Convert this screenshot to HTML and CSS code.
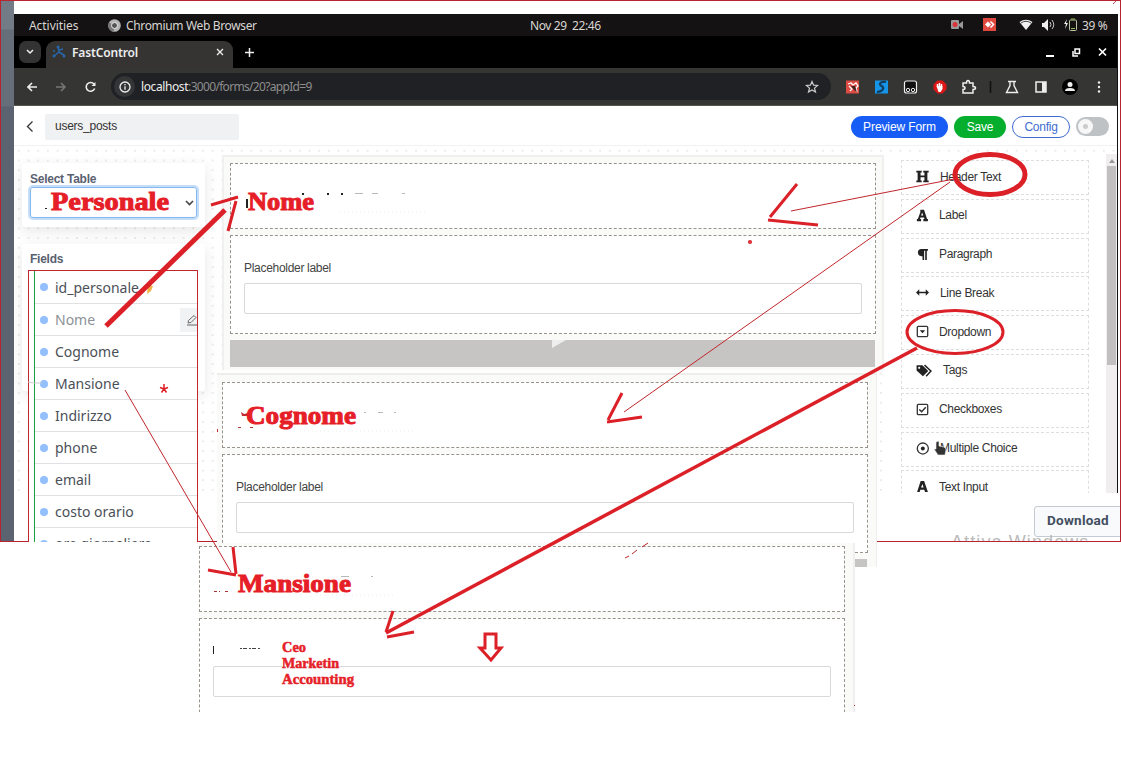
FILE: index.html
```html
<!DOCTYPE html>
<html lang="en">
<head>
<meta charset="utf-8">
<title>FastControl</title>
<link rel="stylesheet" href="styles.css">
</head>
<body>
<div class="screen">
  <div class="frame">
    <div class="strip"></div>
    <div class="content">
      <div class="window">
        <div class="sysbar">
          <span class="activities">Activities</span>
          <svg class="chromium" width="13" height="13" viewBox="0 0 13 13"><circle cx="6.500" cy="6.500" r="6.300" fill="#b5b5b5"/><path d="M6.500 6.500L1 3.500A6.300 6.300 0 0 0 5.500 12.700z" fill="#777"/><circle cx="6.500" cy="6.500" r="3" fill="#555" stroke="#eee"/></svg>
          <span class="appname">Chromium Web Browser</span>
          <span class="clock">Nov 29&nbsp; 22:46</span>
          <svg class="tray" width="130" height="20" viewBox="0 0 130 20">
            <rect x="0" y="5" width="8" height="9" rx="1" fill="#999"/><path d="M8 9l4-3v8l-4-3z" fill="#999"/><circle cx="4" cy="9.500" r="2.500" fill="#d8343c"/>
            <rect x="32" y="3" width="13" height="13" fill="#e04840"/><path d="M34 9.500l3-3 3 3-3 3z" fill="#fff"/><path d="M39.500 6.500l3 3-3 3" fill="none" stroke="#fff" stroke-width="1.500"/>
            <path d="M68.500 7q6.500-4.500 13 0l-6.500 8z" fill="#f1f1f1"/><path d="M70 8q5-3.500 10 0" fill="none" stroke="#444"/>
            <path d="M91 8h2l4-4v12l-4-4h-2z" fill="#eee"/><path d="M99 7q2 3 0 5M101 5q3.500 5 0 9" fill="none" stroke="#ccc"/>
            <path d="M116 4l-3 5h2l-1 5 3-6h-2z" fill="#eee"/><rect x="118.500" y="5" width="7" height="10.500" rx="1" fill="none" stroke="#b9c5a4"/><path d="M120 4h4M120 13.500h4" stroke="#8fbf55"/>
          </svg>
          <span class="battery">39 %</span>
        </div>
        <div class="tabbar">
          <div class="tabmenu"><svg width="8" height="6" viewBox="0 0 8 6"><path d="M1 1l3 3 3-3" fill="none" stroke="#eee" stroke-width="1.500"/></svg></div>
          <div class="tab">
            <svg width="14" height="14" viewBox="0 0 14 14"><path d="M6 1l1 6-5 4M7 7l5 3M7 5l4-1" fill="none" stroke="#2767aa" stroke-width="1.500"/><g fill="#2767aa"><circle cx="6" cy="2" r="1.500"/><circle cx="2" cy="11" r="1.500"/><circle cx="12" cy="11" r="1.500"/><circle cx="2" cy="6" r="1"/></g></svg>
            <span class="tabtitle">FastControl</span>
            <svg width="8" height="8" viewBox="0 0 8 8"><path d="M1 1l6 6M7 1l-6 6" stroke="#eee" stroke-width="1.300"/></svg>
          </div>
          <svg class="plus" width="9" height="9" viewBox="0 0 9 9"><path d="M4.500 0v9M0 4.500h9" stroke="#eee" stroke-width="1.500"/></svg>
          <svg class="winctl" width="62" height="12" viewBox="0 0 62 12"><path d="M0 9h8" stroke="#fff" stroke-width="2"/><path d="M29 2h4.500v4.500h-4.500zM27 4v5h5" fill="none" stroke="#fff" stroke-width="1.500"/><path d="M53 1.500l7 7M60 1.500l-7 7" stroke="#fff" stroke-width="1.700"/></svg>
        </div>
        <div class="toolbar">
          <svg class="nav" width="72" height="14" viewBox="0 0 72 14" fill="none" stroke-width="1.600"><path d="M10 7H1M5 3L1 7l4 4" stroke="#eee"/><path d="M29 7h9M34 3l4 4-4 4" stroke="#777"/><path d="M67 4A4.400 4.400 0 1 0 67.700 8.500" stroke="#eee"/><path d="M68.500 2v4h-4z" fill="#eee"/></svg>
          <div class="urlbar">
            <div class="info"><svg width="12" height="12" viewBox="0 0 12 12"><circle cx="6" cy="6" r="5" fill="none" stroke="#eee" stroke-width="1.300"/><path d="M6 5.200v3.500M6 3v1.300" stroke="#eee" stroke-width="1.300"/></svg></div>
            <span class="url"><b>localhost</b>:3000/forms/20?appId=9</span>
            <svg width="14" height="14" viewBox="0 0 14 14"><path d="M7 1.500l1.600 3.700 4 .3-3.100 2.600 1 4L7 10l-3.500 2.100 1-4-3.100-2.600 4-.3z" fill="none" stroke="#ccc" stroke-width="1.200"/></svg>
          </div>
          <svg class="ext" width="260" height="18" viewBox="0 0 260 18">
            <rect x="0" y="2.500" width="13" height="13" fill="#dc4b42"/><path d="M2 6l3-1 2 2 3-2 2 3-2 2 1 4M3 8l3 3-2 2" fill="none" stroke="#fff" stroke-width="1.300"/><path d="M5 8l4 0 2 6-3-2z" fill="#422"/>
            <rect x="29" y="2.500" width="13" height="13" fill="#1594e8"/><path d="M40 4c-7-1-7 3-4.500 4s3 5-4.500 6" fill="none" stroke="#123d62" stroke-width="2.200"/>
            <rect x="58.500" y="3" width="12" height="12" rx="2" fill="#111" stroke="#eee" stroke-width="1.200"/><circle cx="62" cy="12" r="1.700" fill="none" stroke="#eee"/><circle cx="67" cy="12" r="1.700" fill="none" stroke="#eee"/>
            <g transform="translate(7 0)"><path d="M84.500 2.500h5l4 4v5l-4 4h-5l-4-4v-5z" fill="#dc1717"/><path d="M84.500 9V6M86.500 9V5M88.500 9V6" stroke="#fff" stroke-width="1.500"/><path d="M83.500 8h6v3l-2 3h-2z" fill="#fff"/></g>
            <path d="M117 5h3.500q0-2.500 1.500-2.500t1.500 2.500h3.500v3.500q2.500 0 2.500 1.500t-2.500 1.500V15H117v-3.500q2 0 2-1.500t-2-1.500z" fill="none" stroke="#eee" stroke-width="1.500"/>
            <path d="M144.500 3v12" stroke="#111" stroke-width="1.600"/>
            <path d="M162 3.500h8M164 3.500v4l-3.500 7h11l-3.500-7v-4" fill="none" stroke="#eee" stroke-width="1.400"/>
            <rect x="190" y="4" width="10" height="10" fill="none" stroke="#eee" stroke-width="1.500"/><path d="M196 4h4v10h-4z" fill="#eee"/>
            <circle cx="224" cy="9" r="8" fill="#000"/><circle cx="224" cy="6.500" r="2.500" fill="#eee"/><path d="M219 13q0-3 5-3t5 3z" fill="#eee"/>
            <g fill="#eee"><circle cx="253" cy="4.500" r="1.200"/><circle cx="253" cy="9" r="1.200"/><circle cx="253" cy="13.500" r="1.200"/></g>
          </svg>
        </div>
        <div class="apphead">
          <svg width="8" height="12" viewBox="0 0 8 12"><path d="M6.500 .5L1.500 5.500l5 5" fill="none" stroke="#333" stroke-width="1.300"/></svg>
          <div class="formname">users_posts</div>
          <div class="btn preview">Preview Form</div>
          <div class="btn save">Save</div>
          <div class="btn config">Config</div>
          <div class="toggle"><span></span></div>
        </div>
        <div class="workspace">
          <div class="left">
            <div class="card selectcard"><div class="label">Select Table</div>
              <div class="select"><svg width="9" height="6" viewBox="0 0 9 6"><path d="M1 1l3.500 3.500L8 1" fill="none" stroke="#444" stroke-width="1.600"/></svg></div></div>
            <div class="card fieldcard"><div class="label">Fields</div></div>
          </div>
          <div class="canvas">
            <div class="block title"></div>
            <div class="block field"><div class="ph">Placeholder label</div><div class="input"></div></div>
            <div class="drop"><svg width="14" height="9" viewBox="0 0 14 9"><path d="M0 0h14L0 8z" fill="#eee"/></svg></div>
          </div>
          <div class="palette">
            <div class="item"><svg viewBox="0 0 12 12"><path d="M.3 .7h5v1.700H4.200v2.700h3.600V2.400H6.700V.7h5v1.700h-1.200v7.200h1.200v1.700h-5V9.600h1.100V6.800H4.200v2.800h1.100v1.700h-5V9.600h1.200V2.400H.3z"/></svg><span class="in4">Header Text</span></div>
            <div class="item"><svg viewBox="0 0 12 12"><path d="M4 .8h3.400l2.800 8.400h.8v2H6.800v-2h1l-.4-1.400H4.100L3.700 9.200h1v2H.8v-2h.9L4 3zM5.700 3.200L4.700 6h2z" fill-rule="evenodd"/></svg><span>Label</span></div>
            <div class="item"><svg viewBox="0 0 12 12"><path d="M5 1h6v1.500h-1V11H8.500V2.500h-1V11H6V7.500H5A3.200 3.200 0 0 1 5 1z"/></svg><span>Paragraph</span></div>
            <div class="item"><svg viewBox="0 0 12 12"><path d="M0 6l3-3v2.200h6V3l3 3-3 3V6.800H3V9z"/></svg><span class="in4">Line Break</span></div>
            <div class="item"><svg viewBox="0 0 12 12"><rect x="1.200" y="1.200" width="9.600" height="9.600" rx="1" fill="none" stroke="#333" stroke-width="1.200"/><path d="M3.500 4.800h5L6 7.700z"/></svg><span>Dropdown</span></div>
            <div class="item"><svg class="wide" viewBox="0 0 15 12"><path d="M.5 1H6l5.500 5.500-5 5L.5 6z"/><path d="M8 1l6 5.500-4.500 5" fill="none" stroke="#222" stroke-width="1.400"/><circle cx="3" cy="3.500" r="1" fill="#fff"/></svg><span>Tags</span></div>
            <div class="item"><svg viewBox="0 0 12 12"><rect x="1.200" y="1.200" width="9.600" height="9.600" rx="1" fill="none" stroke="#333" stroke-width="1.200"/><path d="M3 6l2.200 2L9 4" fill="none" stroke="#333" stroke-width="1.400"/></svg><span>Checkboxes</span></div>
            <div class="item"><svg viewBox="0 0 12 12"><circle cx="6.300" cy="6" r="5.100" fill="none" stroke="#333" stroke-width="1.200"/><circle cx="6.300" cy="6" r="1.800"/></svg><span class="in4">Multiple Choice</span></div>
            <div class="item"><svg viewBox="0 0 12 12"><path d="M4.300 1h3.200L11 11H8.300l-.6-2H4l-.6 2H1zM5.900 3.700L4.700 7H7z" fill-rule="evenodd"/></svg><span>Text Input</span></div>
          </div>
          <div class="scroll"><i></i><div class="thumb"></div></div>
        </div>
      </div>
      <div class="below"><div class="download">Download</div><div class="watermark">Attiva Windows</div></div>
    </div>
  </div>

  <div class="piece second">
    <div class="block title"></div>
    <div class="block field"><div class="ph">Placeholder label</div><div class="input"></div></div>
    <div class="drop"></div>
  </div>
  <div class="piece third">
    <div class="block title"></div>
    <div class="block field"><div class="input"></div></div>
  </div>

  <div class="fields">
    <div class="row">id_personale</div>
    <div class="row muted">Nome<span class="edit"><svg width="12" height="12" viewBox="0 0 12 12"><path d="M2 9l.5-2.500L8 1.500l2 2-5 5zM1 11h10" fill="none" stroke="#666" stroke-width="1"/></svg></span></div>
    <div class="row">Cognome</div>
    <div class="row">Mansione</div>
    <div class="row">Indirizzo</div>
    <div class="row">phone</div>
    <div class="row">email</div>
    <div class="row">costo orario</div>
    <div class="row">ore giornaliere</div>
  </div>

  <svg class="notes" width="1121" height="757" viewBox="0 0 1121 757">
    <path d="M28 382l6 1h8" fill="none" stroke="#ccc"/>
    <path d="M148 285l5 1-2 5-4 3z" fill="#f1b44a"/>
    <g fill="#222"><rect x="246" y="199" width="2" height="9"/><rect x="302" y="193" width="2" height="2"/><rect x="327" y="193" width="2" height="2"/><rect x="341" y="193" width="2" height="2"/><rect x="213" y="646" width="1" height="8"/><rect x="45" y="208" width="2" height="1"/></g>
    <path d="M355 193.500h8m9 0h6m24 0h3M364 412.500h2m12 0h5m11 0h2M341 576.500h8m22 0h2" stroke="#999" stroke-width=".7"/>
    <path d="M240 648.500h21" stroke="#444" stroke-dasharray="2 1 4 2"/>
    <path d="M340 212h85M300 431h116M320 595h75" stroke="#eee" stroke-dasharray="1 3"/>
    <path d="M214 591.500h6m5 0h5M238 427.500h4m8 0h3" stroke="#a33" stroke-dasharray="3 2"/>
    <path d="M241 412l3 2 4-1v3h-6zM217 429h1v3h-1zM854 705h1v1h-1zM28 515h1v4h-1z" fill="#c22b32"/>
    <g class="thin"><path d="M791 211L954 179M950 182L624 412M125 390L231 572M625 558l4-2m3-2l5-4m5-3l6-4"/></g>
    <g class="ink">
      <path d="M106 326L225 210" stroke-width="5"/>
      <path d="M211 205l27-8M236 201l-8 30M797 184l-27 33M768 220l50 5M622 393l-14 27M607 422l35-5M233 547l3 27M208 570l28 5M393 611l-7 21M387 637l27-5" stroke-width="3"/>
      <path d="M917 348L386 633" stroke-width="3.500"/>
      <ellipse cx="990" cy="174.500" rx="35" ry="20" stroke-width="5"/>
      <ellipse cx="955" cy="332" rx="48" ry="21.500" stroke-width="3"/>
      <path d="M485 634h11v14h5l-10 12-11-12h5z" stroke-width="3"/>
      <circle cx="750" cy="242" r=".8" stroke-width="2.500"/>
      <path d="M164 384v5m0 0l-4-1.500m4 1.500l4-1.500m-4 1.500l-2.500 3.500m2.500-3.500l2.500 3.500" stroke-width="1.500"/>
    </g>
    <g class="hand">
      <text x="51" y="210" textLength="118" lengthAdjust="spacingAndGlyphs">Personale</text>
      <text x="248" y="210" textLength="66" lengthAdjust="spacingAndGlyphs">Nome</text>
      <text x="246" y="424" textLength="110" lengthAdjust="spacingAndGlyphs">Cognome</text>
      <text x="238" y="592" textLength="113" lengthAdjust="spacingAndGlyphs">Mansione</text>
      <g class="small">
        <text x="282" y="652" textLength="24" lengthAdjust="spacingAndGlyphs">Ceo</text>
        <text x="282" y="668" textLength="57" lengthAdjust="spacingAndGlyphs">Marketin</text>
        <text x="282" y="684" textLength="72" lengthAdjust="spacingAndGlyphs">Accounting</text>
      </g>
    </g>
    <path d="M936 442v7l-2 0 4 6h7l1-6-2-2-5-1v-5z" fill="#333" stroke="#eee" stroke-width=".6"/>
    <path d="M1113 4l3-3" stroke="#b55"/>
  </svg>
</div>
</body>
</html>
```

FILE: styles.css
```css
* { box-sizing: border-box; }
body { margin: 0; background: #fff; font-family: "Liberation Sans", Arial, sans-serif; font-size: 12px; color: #333; }
svg { flex: none; display: block; }
.screen { position: relative; width: 1121px; height: 757px; overflow: hidden; }
.frame { display: flex; height: 542px; border: 1px solid #b7232e; overflow: hidden; }
.strip { width: 13px; background: linear-gradient(#737b86 0 28px, #666e7a 29px 105px, #5b6270 106px); flex: none; }
.content { flex: 1; min-width: 0; padding-top: 13px; }
.window { width: 1104px; height: 479px; display: flex; flex-direction: column; border-right: 1px solid #111; overflow: hidden; }

.sysbar { height: 22px; background: #141212; color: #d8d5d2; display: flex; align-items: center; font: 12px "Noto Sans", sans-serif; padding-left: 15px; white-space: nowrap; flex: none; }
.activities { width: 79px; letter-spacing: -.05px; }
.appname { margin-left: 5px; width: 404px; letter-spacing: -.35px; }
.clock { width: 421px; letter-spacing: -.4px; }
.battery { letter-spacing: -.4px; margin-left: 1px; }
.tabbar { height: 32px; background: #000; display: flex; align-items: center; padding: 5px 9px 0 5px; flex: none; }
.tabmenu { width: 22px; height: 22px; border-radius: 7px; background: #333; display: flex; align-items: center; justify-content: center; margin-bottom: 5px; }
.tab { margin-left: 5px; width: 187px; height: 27px; background: #353433; border-radius: 9px 9px 0 0; display: flex; align-items: center; padding: 0 9px 5px 6px; }
.tabtitle { flex: 1; margin-left: 6px; color: #eee; font: 600 12px "Noto Sans", sans-serif; letter-spacing: -.15px; }
.plus { margin: 0 0 5px 12px; }
.winctl { margin: 0 0 3px auto; }
.toolbar { height: 38px; background: #353534; border-bottom: 1px solid #55554f; display: flex; align-items: center; padding-left: 13px; flex: none; }
.urlbar { margin-left: 12px; width: 720px; height: 27px; border-radius: 14px; background: #202124; display: flex; align-items: center; padding: 0 12px 0 3px; }
.info { width: 21px; height: 21px; border-radius: 50%; background: #343537; display: flex; align-items: center; justify-content: center; }
.url { flex: 1; margin-left: 6px; color: #8d8d8d; font: 12px "Noto Sans", sans-serif; letter-spacing: -.68px; }
.url b { color: #eee; font-weight: 400; letter-spacing: -.4px; }
.ext { margin-left: 15px; }

.apphead { height: 39px; display: flex; align-items: center; padding: 2px 8px 0 12px; flex: none; }
.formname { width: 194px; height: 26px; line-height: 25px; margin-left: 11px; padding-left: 10px; background: #f0f1f3; margin-right: auto; border-radius: 2px; letter-spacing: -.25px; }
.btn { height: 22px; line-height: 22px; border-radius: 11px; color: #fff; text-align: center; margin-right: 6px; letter-spacing: -.25px; }
.preview { width: 97px; background: #175df5; letter-spacing: -.1px; }
.save { width: 52px; background: #06ae2d; }
.config { width: 58px; border: 1px solid #3f6cd0; color: #3f6cd0; line-height: 20px; }
.toggle { width: 33px; height: 19px; border-radius: 10px; background: #bfc2c5; padding: 2px; }
.toggle span { display: block; width: 15px; height: 15px; border-radius: 50%; background: radial-gradient(circle, #ccc 0 2px, #f7f7f7 3px); }

.workspace { flex: 1; display: flex; min-height: 0; border-top: 1px solid #f3f1ef; background: #fff radial-gradient(circle, #eeecea 1px, transparent 1.500px) 0 0 / 9.700px 9.700px; }
.left { width: 208px; padding: 17px 17px 0 8px; }
.card { background: #fff; box-shadow: 0 4px 14px rgba(40,40,40,.11); border-radius: 3px; padding: 9px 8px; }
.selectcard { height: 64px; margin-bottom: 17px; }
.fieldcard { height: 147px; padding-top: 8px; }
.label { font-weight: 700; color: #596170; line-height: 14px; letter-spacing: -.25px; }
.select { height: 31px; margin-top: 1px; border: 1px solid #86b7ee; box-shadow: 0 0 0 2px #c5def8; border-radius: 3px; display: flex; align-items: center; justify-content: flex-end; padding-right: 2px; }
.canvas { width: 662px; margin-top: 9px; height: 215px; border: 2px solid #f2f0ef; border-bottom: 0; background: #fafaf9; padding: 6px 6px 0; }
.block { width: 646px; border: 1px dashed #99938c; background: #fff; }
.title { height: 66px; margin-bottom: 6px; }
.field { height: 99px; padding: 25px 13px 0; }
.ph { height: 15px; line-height: 14px; color: #444; letter-spacing: -.3px; }
.input { height: 31px; margin-top: 7px; border: 1px solid #d9d9dc; border-radius: 2px; background: #fff; }
.drop { width: 645px; height: 27px; margin-top: 6px; background: #c7c5c4; padding-left: 322px; }
.palette { width: 222px; padding: 5px 17px 0; background: #fff; overflow: hidden; display: flex; flex-direction: column; gap: 3.800px; margin-top: 9px; }
.item { height: 35px; flex: none; border: 1px dashed #dedede; display: flex; align-items: center; padding: 0 0 2px 14px; white-space: nowrap; width: 188px; letter-spacing: -.32px; }
.item svg { width: 13px; height: 13px; fill: #222; }
.item .wide { width: 16px; }
.item span { margin-left: 10px; }
.item .wide + span { margin-left: 11px; }
.item .in4 { margin-left: 11px; }
.scroll { width: 11px; background: #f0eeee; margin-top: 8px; padding: 5px 1px 0; }
.scroll i { display: block; width: 0; margin: 0 auto; border: 3px solid transparent; border-bottom: 4px solid #999; border-top: 0; }
.thumb { margin-top: 3px; height: 199px; background: #c1bfbf; }
.below { height: 49px; background: #fff; padding-top: 13px; overflow: hidden; }
.download { margin-left: 1020px; width: 100px; height: 31px; border: 1px solid #c4cad2; border-radius: 3px; background: #f8fafc; color: #434f61; font: 700 13.500px/27px Roboto, sans-serif; padding-left: 12px; letter-spacing: .25px; }
.watermark { margin: -5px 0 0 937px; color: #bbb; font-size: 18px; line-height: 20px; letter-spacing: 1.100px; white-space: nowrap; }

.piece { position: absolute; overflow: hidden; background: #fafaf9; }
.second { left: 217px; top: 371px; width: 660px; height: 196px; padding: 11px 5px 0; border-right: 1px solid #eee; background: linear-gradient(#fff 0 2px, #efedec 2px 4px, #fafaf9 4px); }
.third { left: 199px; top: 543px; width: 656px; height: 169px; padding-top: 3px; border-right: 2px solid #f0efef; }
.third .field { height: 120px; padding-top: 47px; }
.third .input { margin-top: 0; }

.fields { position: absolute; left: 28px; top: 270px; width: 170px; height: 272px; overflow: hidden; background: linear-gradient(90deg, #fff 5px, #18a144 5px 6px, #fff 6px); border: 1px solid #c0272d; border-bottom: 0; padding-left: 6px; }
.row { height: 32px; border-bottom: 1px solid #dfe1e4; display: flex; align-items: center; color: #4b5058; font: 14px/31px "Noto Sans", sans-serif; }
.row:first-child { height: 33px; }
.row::before { content: ""; width: 8px; height: 8px; border-radius: 50%; background: #93bfff; margin: 0 7px 0 5px; }
.muted { color: #8d9196; }
.edit { width: 17px; height: 24px; background: #f1f2f4; margin-left: auto; padding: 6px 0 0 6px; }

.notes { position: absolute; left: 0; top: 0; }
.thin { fill: none; stroke: #c0272d; stroke-width: 1; }
.ink { fill: none; stroke: #dc2028; }
.hand { font: 900 25px "Liberation Serif", serif; fill: #e61e28; stroke: #e61e28; stroke-width: 1; }
.small { font-size: 14px; stroke-width: .5; }
```
